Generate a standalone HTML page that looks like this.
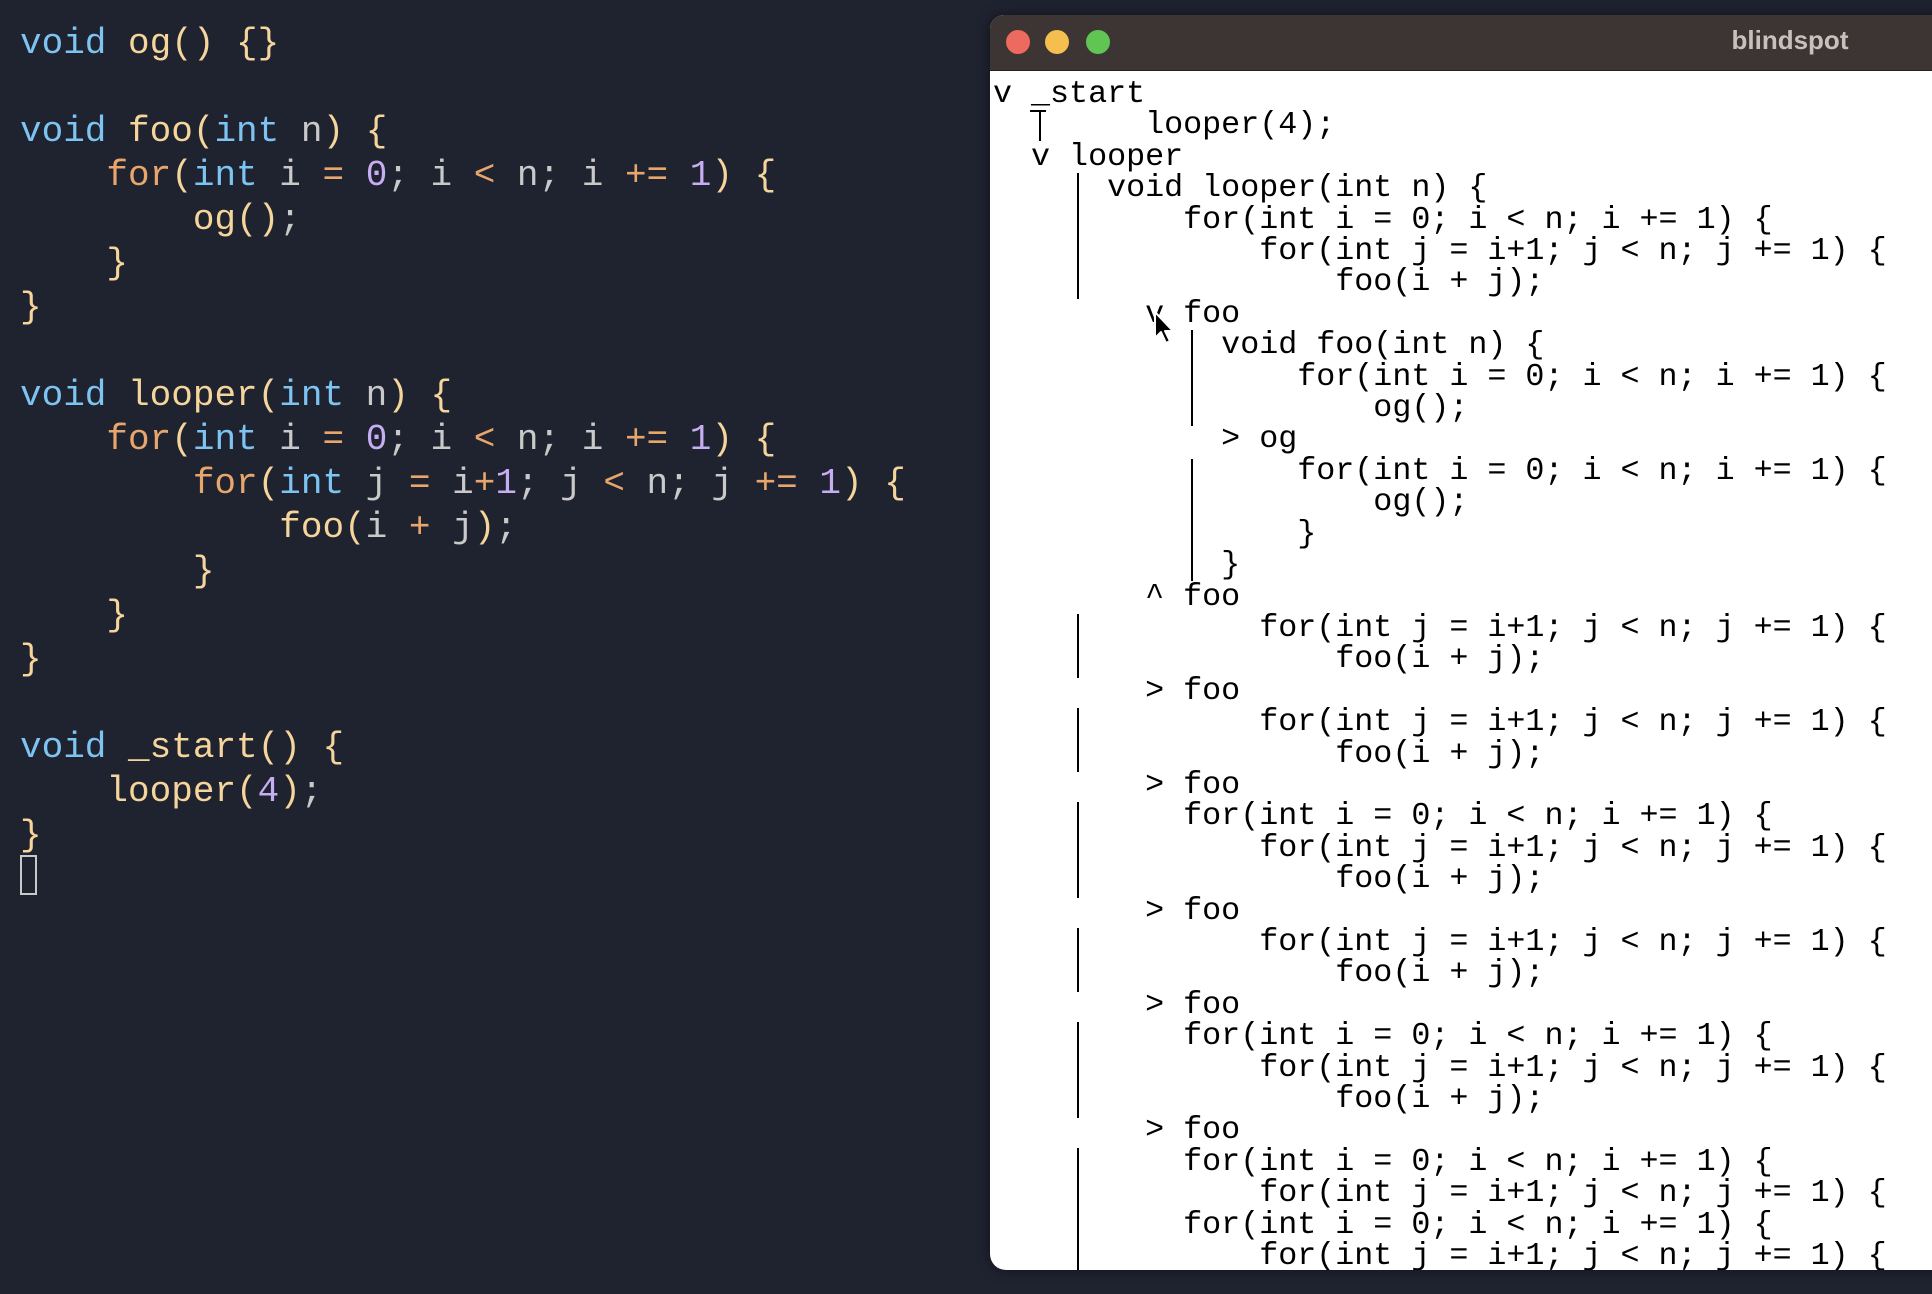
<!DOCTYPE html>
<html><head><meta charset="utf-8">
<style>
html,body{margin:0;padding:0;}
body{width:1932px;height:1294px;overflow:hidden;background:#1f2330;position:relative;font-family:"Liberation Mono","DejaVu Sans Mono",monospace;}
#ed{position:absolute;left:20px;top:22px;margin:0;font-size:36px;line-height:44px;color:#c9c9c9;white-space:pre;}
.k{color:#7dc4f2}.f{color:#f5d59b}.o{color:#e8a66c}.n{color:#c7adf2}.b{color:#f5d59b}
#cur{position:absolute;left:20px;top:855px;width:17px;height:40px;border:2px solid #c9c9c9;box-sizing:border-box;}
#win{position:absolute;left:990px;top:15px;width:960px;height:1255px;background:#fff;border-radius:14px 0 0 16px;overflow:hidden;box-shadow:0 0 12px rgba(0,0,0,.5);}
#tb{position:absolute;left:0;top:0;right:0;height:55px;background:#3d3533;border-bottom:1px solid #222;}
.dot{position:absolute;top:15px;width:24px;height:24px;border-radius:50%;}
#title{position:absolute;left:740px;top:10px;width:120px;text-align:center;font-family:"Liberation Sans",sans-serif;font-weight:bold;font-size:26px;color:#c9c0bd;}
#tree{position:absolute;left:3px;top:64px;margin:0;font-size:31.7px;line-height:31.4px;color:#000;white-space:pre;}
.bar{position:absolute;width:2px;background:#000;}
</style></head><body>
<pre id="ed"><span class="k">void</span> <span class="f">og</span><span class="b">() {}</span>

<span class="k">void</span> <span class="f">foo</span><span class="b">(</span><span class="k">int</span> n<span class="b">) {</span>
    <span class="o">for</span><span class="b">(</span><span class="k">int</span> i <span class="o">=</span> <span class="n">0</span>; i <span class="o">&lt;</span> n; i <span class="o">+=</span> <span class="n">1</span><span class="b">) {</span>
        <span class="f">og</span><span class="b">()</span>;
    <span class="b">}</span>
<span class="b">}</span>

<span class="k">void</span> <span class="f">looper</span><span class="b">(</span><span class="k">int</span> n<span class="b">) {</span>
    <span class="o">for</span><span class="b">(</span><span class="k">int</span> i <span class="o">=</span> <span class="n">0</span>; i <span class="o">&lt;</span> n; i <span class="o">+=</span> <span class="n">1</span><span class="b">) {</span>
        <span class="o">for</span><span class="b">(</span><span class="k">int</span> j <span class="o">=</span> i<span class="o">+</span><span class="n">1</span>; j <span class="o">&lt;</span> n; j <span class="o">+=</span> <span class="n">1</span><span class="b">) {</span>
            <span class="f">foo</span><span class="b">(</span>i <span class="o">+</span> j<span class="b">)</span>;
        <span class="b">}</span>
    <span class="b">}</span>
<span class="b">}</span>

<span class="k">void</span> <span class="f">_start</span><span class="b">() {</span>
    <span class="f">looper</span><span class="b">(</span><span class="n">4</span><span class="b">)</span>;
<span class="b">}</span></pre>
<div id="cur"></div>

<div id="win">
<div id="tb">
<div class="dot" style="left:16px;background:#ed6a5e"></div>
<div class="dot" style="left:55px;background:#f5bf4f"></div>
<div class="dot" style="left:96px;background:#61c554"></div>
<div id="title">blindspot</div>
</div>
<pre id="tree">v _start
        looper(4);
  v looper
      void looper(int n) {
          for(int i = 0; i &lt; n; i += 1) {
              for(int j = i+1; j &lt; n; j += 1) {
                  foo(i + j);
        v foo
            void foo(int n) {
                for(int i = 0; i &lt; n; i += 1) {
                    og();
            &gt; og
                for(int i = 0; i &lt; n; i += 1) {
                    og();
                }
            }
        ^ foo
              for(int j = i+1; j &lt; n; j += 1) {
                  foo(i + j);
        &gt; foo
              for(int j = i+1; j &lt; n; j += 1) {
                  foo(i + j);
        &gt; foo
          for(int i = 0; i &lt; n; i += 1) {
              for(int j = i+1; j &lt; n; j += 1) {
                  foo(i + j);
        &gt; foo
              for(int j = i+1; j &lt; n; j += 1) {
                  foo(i + j);
        &gt; foo
          for(int i = 0; i &lt; n; i += 1) {
              for(int j = i+1; j &lt; n; j += 1) {
                  foo(i + j);
        &gt; foo
          for(int i = 0; i &lt; n; i += 1) {
              for(int j = i+1; j &lt; n; j += 1) {
          for(int i = 0; i &lt; n; i += 1) {
              for(int j = i+1; j &lt; n; j += 1) {</pre>
<div class="bar" style="left:49px;top:96px;height:30px"></div>
<div class="bar" style="left:40px;top:95px;width:16px;height:2px"></div>
<div class="bar" style="left:87px;top:158px;height:126px"></div>
<div class="bar" style="left:201px;top:315px;height:96px"></div>
<div class="bar" style="left:201px;top:444px;height:122px"></div>
<div class="bar" style="left:87px;top:599px;height:64px"></div>
<div class="bar" style="left:87px;top:693px;height:64px"></div>
<div class="bar" style="left:87px;top:787px;height:96px"></div>
<div class="bar" style="left:87px;top:913px;height:64px"></div>
<div class="bar" style="left:87px;top:1007px;height:96px"></div>
<div class="bar" style="left:87px;top:1133px;height:130px"></div>
<svg style="position:absolute;left:163px;top:295px" width="24" height="36" viewBox="0 0 24 36">
<path d="M2 2 L2 28 L8 22 L13 33 L17 31 L12 21 L20 21 Z" fill="#000" stroke="#fff" stroke-width="2" stroke-linejoin="round"/>
</svg>
</div>
</body></html>
